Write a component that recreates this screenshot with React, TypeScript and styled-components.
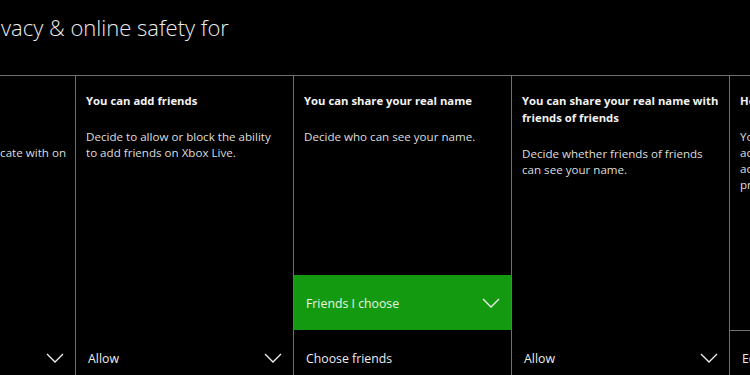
import * as React from "react";
import styled, { createGlobalStyle } from "styled-components";

const GlobalStyle = createGlobalStyle`
  html, body {
    margin: 0;
    padding: 0;
    background: #000;
    overflow: hidden;
  }
  body {
    font-family: "Open Sans", "Noto Sans", sans-serif;
    color: #e6e6e6;
  }
`;

// Page frame
const Screen = styled.div`
  width: 750px;
  height: 375px;
  background: #000;
  overflow: hidden;
  display: flex;
  flex-direction: column;
`;

// Page heading, scrolled partly out of view on the left
const Header = styled.header`
  height: 76px;
  flex: none;
  display: flex;
  align-items: flex-start;
  padding: 11px 0 0 1px;
  box-sizing: border-box;
  border-bottom: 1px solid #6f6f6f;
`;

const PageTitle = styled.h1`
  margin: 0;
  font-size: 22px;
  font-weight: 300;
  line-height: 32px;
  color: #ececec;
  white-space: nowrap;
`;

// Row of setting columns
const Track = styled.div`
  flex: none;
  display: flex;
  height: 309px;
`;

const Column = styled.section<{ $width?: number; $edge?: boolean }>`
  flex: none;
  width: ${(p) => p.$width ?? 218}px;
  box-sizing: border-box;
  border-left: ${(p) => (p.$edge ? "none" : "1px solid #6f6f6f")};
  display: flex;
  flex-direction: column;
  overflow: hidden;
`;

const Info = styled.div<{ $alignEnd?: boolean }>`
  padding: 16px 9px 0 10px;
  flex: 1;
  display: flex;
  flex-direction: column;
  align-items: ${(p) => (p.$alignEnd ? "flex-end" : "stretch")};
  white-space: ${(p) => (p.$alignEnd ? "nowrap" : "normal")};
`;

const Title = styled.h2`
  margin: 0 0 20px;
  font-size: 11.3px;
  font-weight: 700;
  line-height: 17px;
  color: #f2f2f2;
  min-height: 17px;
`;

const Description = styled.p`
  margin: 0;
  font-size: 11.6px;
  line-height: 16px;
  color: #dedede;
`;

const Picker = styled.div<{ $active?: boolean; $outlined?: boolean; $end?: boolean }>`
  height: 55px;
  flex: none;
  display: flex;
  align-items: center;
  justify-content: ${(p) => (p.$end ? "flex-end" : "space-between")};
  padding: 1px 11px 0 12px;
  box-sizing: border-box;
  background: ${(p) => (p.$active ? "#139a10" : "transparent")};
  border-top: ${(p) => (p.$outlined ? "1px solid #6f6f6f" : "none")};
  font-size: 12.3px;
  color: ${(p) => (p.$active ? "#e9f6e6" : "#ececec")};
`;

const PickerLabel = styled.span`
  white-space: nowrap;
`;

const Chevron = () => (
  <svg width="18" height="10" viewBox="0 0 18 10" fill="none">
    <path d="M1 1 L9 9 L17 1" stroke="#f0f0f0" strokeWidth="1.3" />
  </svg>
);

export default function App() {
  return (
    <>
      <GlobalStyle />
      <Screen>
        <Header>
          <PageTitle>vacy &amp; online safety for</PageTitle>
        </Header>
        <Track>
          <Column $width={75} $edge>
            <Info $alignEnd>
              <Title>&nbsp;</Title>
              <Description>
                &nbsp;
                <br />
                cate with on
              </Description>
            </Info>
            <Picker $end>
              <Chevron />
            </Picker>
          </Column>

          <Column>
            <Info>
              <Title>You can add friends</Title>
              <Description>
                Decide to allow or block the ability to add friends on Xbox Live.
              </Description>
            </Info>
            <Picker>
              <PickerLabel>Allow</PickerLabel>
              <Chevron />
            </Picker>
          </Column>

          <Column>
            <Info>
              <Title>You can share your real name</Title>
              <Description>Decide who can see your name.</Description>
            </Info>
            <Picker $active>
              <PickerLabel>Friends I choose</PickerLabel>
              <Chevron />
            </Picker>
            <Picker>
              <PickerLabel>Choose friends</PickerLabel>
            </Picker>
          </Column>

          <Column>
            <Info>
              <Title>You can share your real name with friends of friends</Title>
              <Description>
                Decide whether friends of friends can see your name.
              </Description>
            </Info>
            <Picker>
              <PickerLabel>Allow</PickerLabel>
              <Chevron />
            </Picker>
          </Column>

          <Column>
            <Info>
              <Title>How others see your activity</Title>
              <Description>
                You can decide who sees your
                <br />
                activity feed and other
                <br />
                accounts linked to your
                <br />
                profile.
              </Description>
            </Info>
            <Picker $outlined>
              <PickerLabel>Edit</PickerLabel>
            </Picker>
          </Column>
        </Track>
      </Screen>
    </>
  );
}
